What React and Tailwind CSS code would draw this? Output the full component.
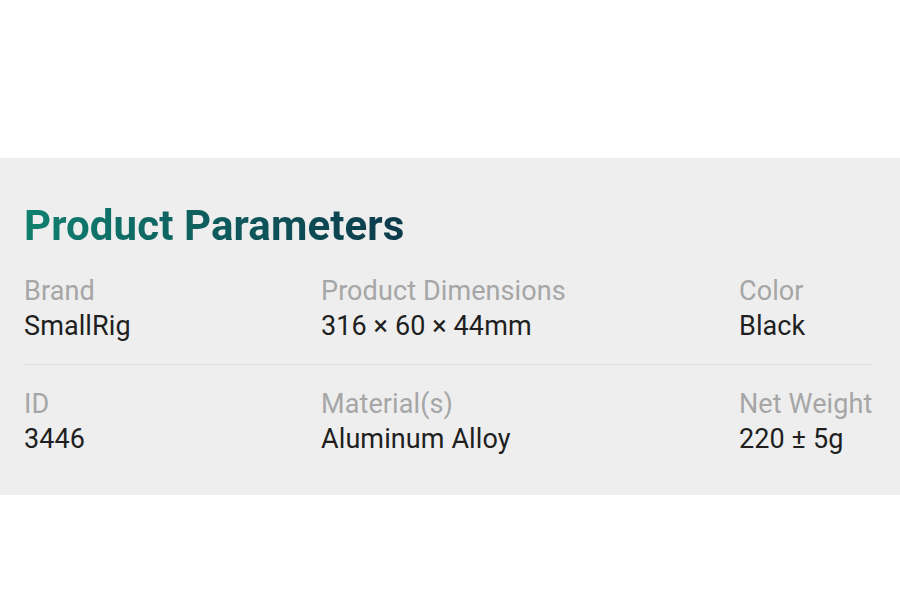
export default function App() {
  const rows = [
    [
      ["Brand", "SmallRig"],
      ["Product Dimensions", "316 × 60 × 44mm"],
      ["Color", "Black"],
    ],
    [
      ["ID", "3446"],
      ["Material(s)", "Aluminum Alloy"],
      ["Net Weight", "220 ± 5g"],
    ],
  ];
  return (
    <div className="w-[900px] h-[600px] bg-white flex flex-col" style={{ fontFamily: "Roboto, 'Liberation Sans', sans-serif" }}>
      <div className="h-[158px]" />
      <div className="h-[337px] bg-[#eeeeee] pl-[24px] pr-[28px] pt-[44px]">
        <h1 className="text-[42px] leading-[48px] font-bold tracking-[0.1px] bg-gradient-to-r from-[#10806f] to-[#0c3a4b] bg-clip-text text-transparent w-fit">
          Product Parameters
        </h1>
        <div className="mt-[24px]">
          {rows.map((row, i) => (
            <div key={i} className={i === 0 ? "grid grid-cols-[297px_418px_1fr] pb-[20px] border-b border-[#dcdcdc]" : "grid grid-cols-[297px_418px_1fr] pt-[22px]"}>
              {row.map(([label, value]) => (
                <div key={label} className="flex flex-col whitespace-nowrap">
                  <span className="text-[27px] leading-[35px] tracking-[0.1px] text-[#a6a6a6]">{label}</span>
                  <span className="text-[27px] leading-[35px] tracking-[0.1px] text-[#1f1f1f]">{value}</span>
                </div>
              ))}
            </div>
          ))}
        </div>
      </div>
    </div>
  );
}
